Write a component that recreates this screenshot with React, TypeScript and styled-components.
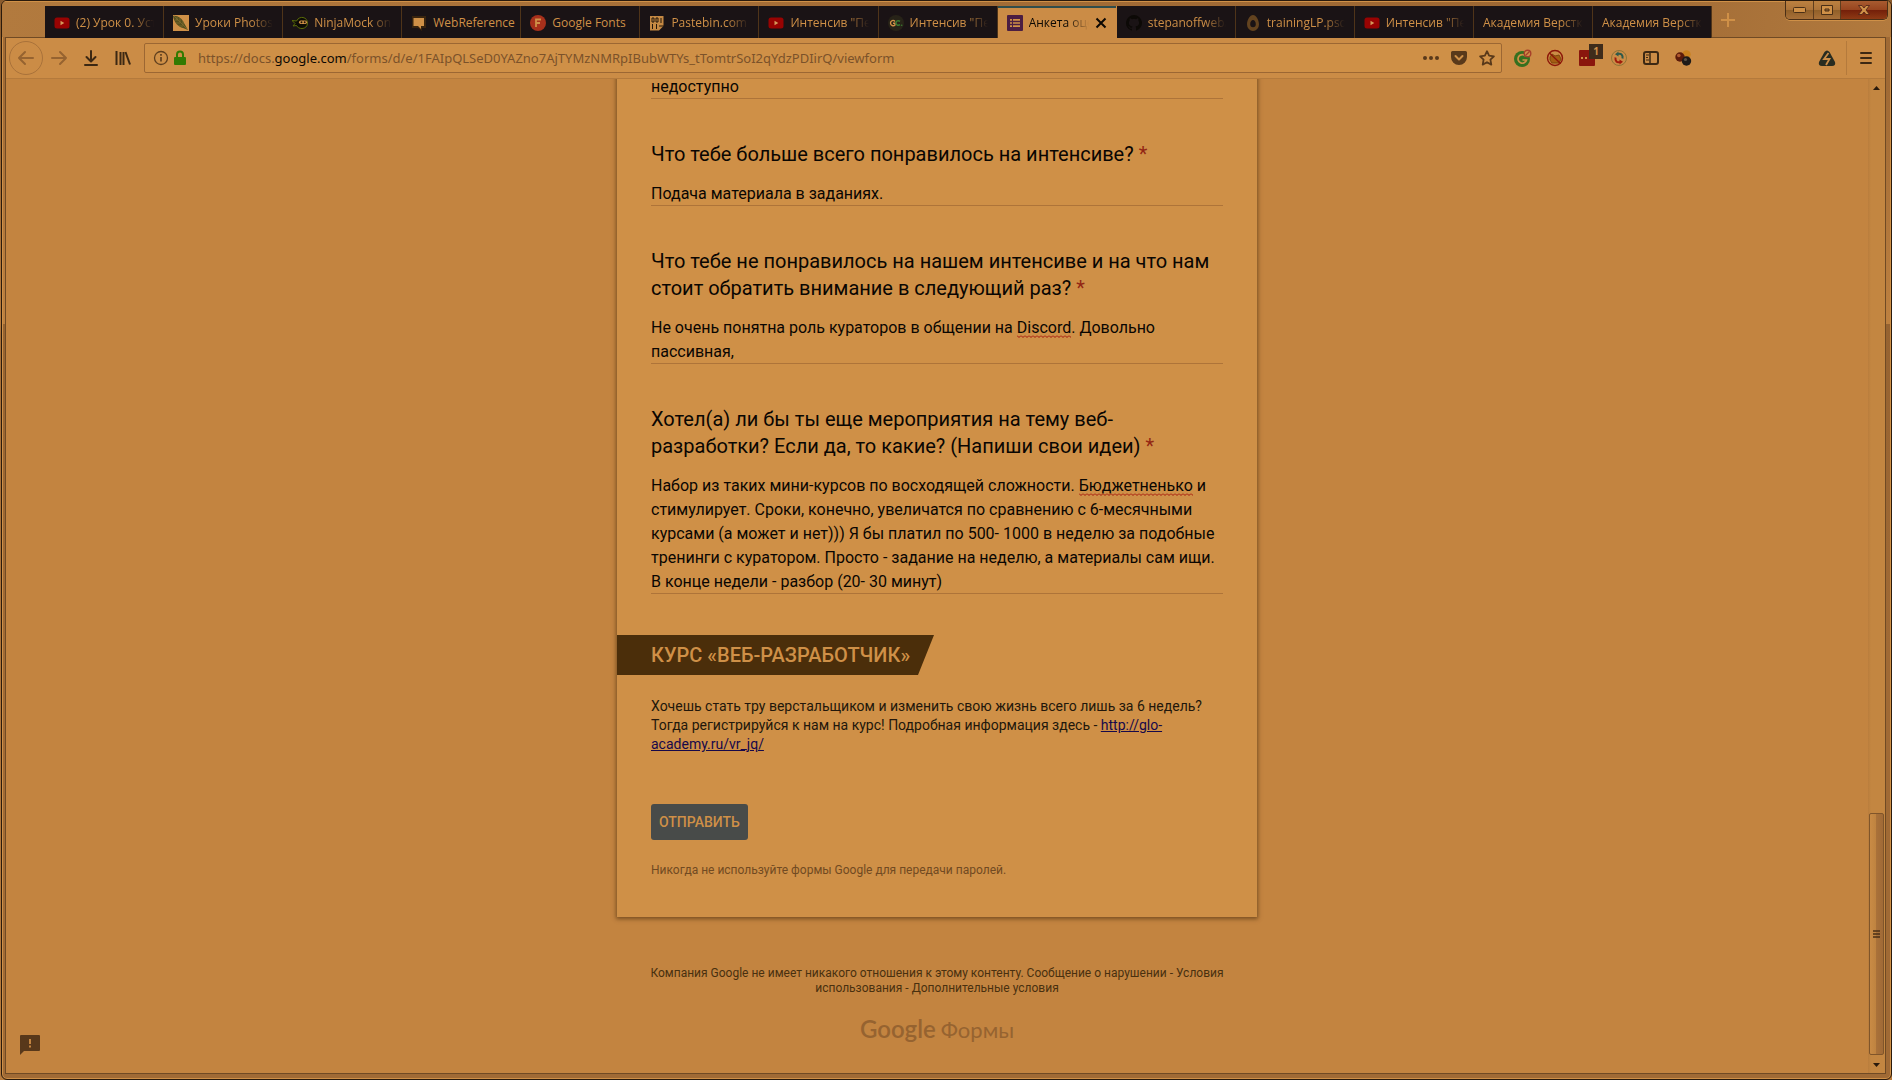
import React, { useLayoutEffect, useState } from 'react';
import styled, { createGlobalStyle, css } from 'styled-components';

const ui = '"Noto Sans", "Open Sans", sans-serif';
const tabFont = '"Open Sans", "Noto Sans", sans-serif';
const roboto = 'Roboto, "Liberation Sans", sans-serif';

const Global = createGlobalStyle`
  *, *::before, *::after { box-sizing: border-box; }
  body { margin: 0; background: #a97139; font-family: ${ui}; }
`;

const Desktop = styled.div`
  height: 100vh;
  padding-left: 1px;
  background: linear-gradient(#8a5b2d, #b87c3e 30%, #a97139 31%, #b87c3e);
`;

const Window = styled.div`
  height: 100%;
  display: flex;
  flex-direction: column;
  overflow: hidden;
  border: 1px solid #2a1a0c;
  border-radius: 6px;
  background: linear-gradient(#a06a35 8%, #be8140 30%, #966331 30%, #a06a35 60%);
  box-shadow: inset 0 0 0 1px #cf9047;
`;

const TitleBar = styled.header`
  display: flex;
  align-items: flex-start;
  height: 36px;
  padding: 5px 3px 0 43px;
  background: linear-gradient(100deg, #b27a3e, #a56e37 40%, #9c6733 82%, #b27a3e 100%);
  box-shadow: inset 0 1px 0 #cf9047;
`;

const Tabs = styled.nav`
  position: relative;
  display: flex;
  flex: 0 1 1667px;
  min-width: 0;
  height: 32px;
`;

const TabButton = styled.button<{ $active?: boolean }>`
  flex: 1 1 0;
  min-width: 0;
  display: flex;
  align-items: center;
  gap: 6px;
  padding: 2px 9px 0;
  border: 0;
  border-right: 1px solid #4f3419;
  background: #1a1315;
  color: #cf9047;
  font: 12px/16px ${tabFont};
  text-align: left;
  ${p => p.$active && css`
    background: #cb8c46;
    color: #0c0803;
    border-right-color: #cb8c46;
    box-shadow: inset 0 2px 0 #2f4d4c;
  `}
  > svg { flex: none; }
`;

const TabLabel = styled.span<{ $whole?: boolean }>`
  flex: 1;
  min-width: 0;
  overflow: ${p => (p.$whole ? 'visible' : 'hidden')};
  white-space: nowrap;
  mask-image: ${p => (p.$whole ? 'none' : 'linear-gradient(to left, transparent, #000 22px)')};
`;

const NewTab = styled.button`
  width: 32px;
  height: 31px;
  padding: 0;
  border: 0;
  background: none;
  color: #cf9047;
`;

const Controls = styled.div`
  display: flex;
  height: 19px;
  margin: -5px 0 0 auto;
  border: 1px solid #4a2f16;
  border-top: 0;
  border-radius: 0 0 5px 5px;
  overflow: hidden;
  box-shadow: 0 1px 0 #cf9047;
`;

const Control = styled.button<{ $close?: boolean }>`
  display: grid;
  place-items: center;
  width: ${p => (p.$close ? 47 : 27)}px;
  padding: 0;
  border: 0;
  border-left: 1px solid #5f3d1d;
  background: ${p => (p.$close
    ? 'linear-gradient(#a85b30, #98451f 48%, #74200a 52%, #8e3a14)'
    : 'linear-gradient(#bd8140, #ac7339 48%, #916029 52%, #a87038)')};
  &:first-child { border-left: 0; }
`;

const Frame = styled.div`
  flex: 1;
  min-height: 0;
  display: flex;
  flex-direction: column;
  margin: 0 5px 5px 3px;
  border: 1px solid #704a24;
`;

const Toolbar = styled.div`
  display: flex;
  align-items: center;
  height: 41px;
  flex: none;
  padding: 0 3px;
  background: #cb8c46;
  border-bottom: 1px solid #b47a3c;
`;

const ToolButton = styled.button<{ $circle?: boolean; $size?: number }>`
  display: grid;
  place-items: center;
  flex: none;
  width: ${p => p.$size ?? 32}px;
  height: 34px;
  padding: 0;
  border: ${p => (p.$circle ? '1px solid #a9723a' : '0')};
  border-radius: ${p => (p.$circle ? '50%' : '0')};
  background: none;
  position: relative;
`;

const UrlBar = styled.div`
  flex: 1 1 0;
  max-width: 1358px;
  display: flex;
  align-items: center;
  height: 30px;
  margin-left: 5px;
  padding: 0 0 0 8px;
  border: 1px solid #9c6733;
  border-radius: 2px;
  background: #cf9047;
  > svg { flex: none; margin-right: 4px; }
`;

const Url = styled.div`
  flex: 1;
  min-width: 0;
  overflow: hidden;
  white-space: nowrap;
  padding-left: 7px;
  font: 13px/20px ${ui};
  color: #7b522a;
  b { font-weight: 400; color: #0c0803; }
`;

const UrlActions = styled.div`
  display: flex;
  > button { width: 28px; }
`;

const Extensions = styled.div`
  display: flex;
  margin-left: 5px;
`;

const Badge = styled.span`
  position: absolute;
  top: 3px;
  right: 0;
  width: 14px;
  height: 15px;
  background: #3f2c1b;
  color: #cf9047;
  font: bold 10px/15px ${ui};
  text-align: center;
`;

const MenuArea = styled.div`
  display: flex;
  align-items: center;
  gap: 3px;
  margin-left: auto;
`;

const MenuBox = styled.div`
  padding-left: 3px;
  border-left: 1px solid #b47a3c;
`;

const View = styled.div`
  flex: 1;
  min-height: 0;
  display: flex;
  background: #c38440;
`;

const Page = styled.main`
  flex: 1;
  min-width: 0;
  display: flex;
  flex-direction: column;
  justify-content: flex-end;
  align-items: center;
  overflow: hidden;
  position: relative;
  font-family: ${roboto};
`;

const Card = styled.form`
  flex: none;
  width: 640px;
  max-width: 100%;
  padding: 16px 34px 38px;
  background: #cf9047;
  box-shadow: 0 1px 4px 1px rgba(60, 34, 8, 0.55);
`;

const Questions = styled.div`
  display: flex;
  flex-direction: column;
  gap: 42px;
  margin-bottom: 41px;
`;

const Title = styled.label`
  display: block;
  margin-bottom: 14px;
  font-size: 20px;
  line-height: 27px;
  color: #0a0602;
`;

const Star = styled.span`
  color: #932613;
`;

const AnswerBox = styled.div`
  position: relative;
  box-shadow: inset 0 -1px 0 #ae7439;
`;

const Answer = styled.textarea`
  display: block;
  width: 100%;
  padding: 0;
  border: 0;
  outline: 0;
  resize: none;
  overflow: hidden;
  background: none;
  color: #0a0602;
  font: 16px/24px ${roboto};
`;

const Squiggle = styled.svg`
  position: absolute;
  top: 19px;
  height: 3px;
`;

const Banner = styled.h2`
  width: 317px;
  height: 40px;
  margin: 0 0 22px -34px;
  padding-left: 34px;
  background: #4b2e0a;
  clip-path: polygon(0 0, 100% 0, calc(100% - 16px) 100%, 0 100%);
  color: #cf9047;
  font-size: 20px;
  font-weight: 500;
  line-height: 40px;
  white-space: nowrap;
`;

const Promo = styled.p`
  margin: 0 0 50px;
  font-size: 14px;
  line-height: 19px;
  color: #22170b;
  a { color: #16084a; }
`;

const Submit = styled.button`
  display: block;
  height: 36px;
  margin-bottom: 21px;
  padding: 0 8px;
  border: 0;
  border-radius: 3px;
  background: #484b49;
  color: #cf9047;
  font: 500 14px/36px ${roboto};
`;

const Note = styled.p`
  margin: 0;
  font-size: 12px;
  line-height: 18px;
  color: #714a22;
`;

const Footer = styled.footer`
  flex: none;
  width: 576px;
  max-width: 100%;
  padding: 49px 0 29px;
  text-align: center;
  font-size: 12px;
  line-height: 15px;
  color: #49300f;
  a { color: inherit; text-decoration: none; }
`;

const Logo = styled.div`
  display: flex;
  justify-content: center;
  align-items: baseline;
  gap: 5px;
  height: 30px;
  margin-top: 18px;
  color: #966330;
  font-family: Lato, sans-serif;
  font-size: 22px;
  line-height: 30px;
`;

const LogoMark = styled.span`
  font-size: 24px;
  font-weight: 600;
`;

const Report = styled.button`
  position: absolute;
  left: 14px;
  bottom: 18px;
  width: 20px;
  height: 20px;
  padding: 0;
  border: 0;
  background: none;
  > svg { display: block; }
`;

const Scroll = styled.div`
  width: 17px;
  flex: none;
  display: flex;
  flex-direction: column;
  align-items: center;
  justify-content: space-between;
  padding: 7px 1px 6px;
  background: linear-gradient(90deg, #b97d3d, #c38641 3px, #c38641);
`;

const Track = styled.div`
  flex: 1;
  width: 15px;
  display: flex;
  align-items: flex-end;
  padding: 6px 0 8px;
`;

const Thumb = styled.div`
  display: grid;
  place-items: center;
  width: 15px;
  height: 242px;
  border: 1px solid #80552a;
  border-radius: 2px;
  background: linear-gradient(90deg, #c98b45, #bf8340 45%, #a97139 50%, #a06a37);
`;

const YouTube = () => (
  <svg width="16" height="16" viewBox="0 0 16 16">
    <rect x="0.5" y="2.5" width="15" height="11" rx="2.5" fill="#980302" />
    <path d="M6.5 5.8 10.3 8 6.5 10.2z" fill="#d59a5a" />
  </svg>
);
const Feather = () => (
  <svg width="16" height="16" viewBox="0 0 16 16">
    <rect width="16" height="16" fill="#cf9047" />
    <path d="M0 1C4 0 9 3 11 8l4 7-5-2C5 12 1 7 0 1z" fill="#56501f" />
    <path d="M1 1l13 13M4 2v3M7 3v4M10 6v4M2 5h3M3 8h4M6 11h4" stroke="#857030" strokeWidth=".7" />
  </svg>
);
const Ninja = () => (
  <svg width="16" height="16" viewBox="0 0 16 16">
    <path d="M0 5.500l4.500.5C6 3 9 2 11 2.500c3 .5 4.500 3 4.500 5.500 0 3.500-2.500 5.500-5.500 5.500-2.500 0-4.500-1-5.500-3L1 11l2-2.500z" fill="#0d0b05" stroke="#5b6c0a" />
    <rect x="7" y="5.500" width="8" height="3.500" rx="1.700" fill="#cf9047" />
    <circle cx="9.500" cy="7.200" r="1" fill="#1a1208" /><circle cx="12.700" cy="7.200" r="1" fill="#1a1208" />
  </svg>
);
const WebRef = () => (
  <svg width="16" height="16" viewBox="0 0 16 16">
    <path d="M1 1h14v12h-4v3l-4-3H1z" fill="#38240f" />
    <path d="M2.500 3h10.500v8H10v3l-3-3H2.500z" fill="#cf9047" />
  </svg>
);
const FontsIcon = () => (
  <svg width="16" height="16" viewBox="0 0 16 16">
    <circle cx="8" cy="8" r="8" fill="#a7301b" />
    <path d="M6 12V4.500h5M6 8h4" stroke="#cf9047" strokeWidth="1.800" fill="none" />
  </svg>
);
const Pastebin = () => (
  <svg width="16" height="16" viewBox="0 0 16 16">
    <path d="M1 1h13.500v10L10 15.500H1z" fill="#c58943" />
    <path d="M3 3h2v4H3zM7 3h2v4H7zM12 3v5M3.500 9v5M7.500 9v5M10 11h5" stroke="#23170b" fill="none" />
  </svg>
);
const GetCourse = () => (
  <svg width="16" height="16" viewBox="0 0 16 16">
    <circle cx="8" cy="8" r="8" fill="#272318" />
    <path d="M7 6.500C5.500 4.500 2.500 5.500 2.500 8s3 3.500 4.500 2V8.200H5" stroke="#cf9047" strokeWidth="1.400" fill="none" />
    <path d="M12 6.300c-2-1.500-4 0-4 1.700s2 3.200 4 1.700" stroke="#397a30" strokeWidth="1.500" fill="none" />
    <circle cx="13.700" cy="10.300" r=".8" fill="#397a30" />
  </svg>
);
const FormsIcon = () => (
  <svg width="16" height="16" viewBox="0 0 16 16">
    <rect width="16" height="16" rx="1" fill="#4b1e42" />
    <path d="M3 4.800h2M3 8h2M3 11.200h2M6 4.800h7M6 8h7M6 11.200h7" stroke="#cf9047" strokeWidth="1.700" />
  </svg>
);
const GitHub = () => (
  <svg width="16" height="16" viewBox="0 0 16 16">
    <path fill="#0c0906" d="M8 0a8 8 0 0 0-2.530 15.590c.4.070.55-.17.55-.38v-1.490c-2.230.48-2.700-.95-2.700-.95-.36-.92-.89-1.170-.89-1.170-.73-.5.050-.49.050-.49.8.060 1.230.83 1.230.83.72 1.220 1.870.87 2.330.66.070-.52.280-.87.510-1.070-1.780-.2-3.640-.89-3.640-3.950 0-.87.310-1.590.82-2.150-.08-.2-.36-1.020.08-2.120 0 0 .67-.21 2.200.82a7.600 7.600 0 0 1 4 0c1.530-1.040 2.200-.82 2.200-.82.44 1.100.16 1.920.08 2.120.51.560.82 1.270.82 2.150 0 3.070-1.870 3.750-3.650 3.950.29.250.54.730.54 1.480v2.190c0 .21.150.46.550.38A8 8 0 0 0 8 0z" />
  </svg>
);
const Egg = () => (
  <svg width="16" height="16" viewBox="0 0 16 16">
    <path fillRule="evenodd" fill="#63431f" d="M8 0c3 0 6 5 6 9.500a6 6.500 0 0 1-12 0C2 5 5 0 8 0zm0 5C6.500 5 5.200 7 5.200 9.200a2.800 3 0 0 0 5.600 0C10.800 7 9.500 5 8 5z" />
  </svg>
);

type TabData = { label: string; icon?: React.ReactNode; active?: boolean; whole?: boolean };
const tabs: TabData[] = [
  { label: '(2) Урок 0. Установка', icon: <YouTube /> },
  { label: 'Уроки Photoshop', icon: <Feather /> },
  { label: 'NinjaMock online', icon: <Ninja /> },
  { label: 'WebReference', icon: <WebRef />, whole: true },
  { label: 'Google Fonts', icon: <FontsIcon />, whole: true },
  { label: 'Pastebin.com - #1', icon: <Pastebin /> },
  { label: 'Интенсив "Первый', icon: <YouTube /> },
  { label: 'Интенсив "Первый', icon: <GetCourse /> },
  { label: 'Анкета оценки', icon: <FormsIcon />, active: true },
  { label: 'stepanoffweb/tr', icon: <GitHub /> },
  { label: 'trainingLP.psd -', icon: <Egg /> },
  { label: 'Интенсив "Первый', icon: <YouTube /> },
  { label: 'Академия Верстки' },
  { label: 'Академия Верстки' },
];

const ink = '#3c2813';

const BackIcon = ({ flip }: { flip?: boolean }) => (
  <svg width="18" height="16" viewBox="0 0 18 16" fill="none" stroke="#966330" strokeWidth="2" strokeLinecap="round" strokeLinejoin="round">
    <path d={flip ? 'M2 8h14M10 2l6 6-6 6' : 'M16 8H2M8 2 2 8l6 6'} />
  </svg>
);

const ExtIcons = {
  green: (
    <svg width="18" height="18" viewBox="0 0 18 18">
      <circle cx="8" cy="10" r="8" fill="#35701f" />
      <path d="M11.500 7A4.300 4.300 0 1 0 12.500 11H8.500" stroke="#cf9047" strokeWidth="1.700" fill="none" />
      <circle cx="13.500" cy="4.500" r="3.300" fill="#cf9047" stroke="#a7402a" strokeWidth="1.400" />
      <path d="M11.500 6.500l4-4" stroke="#a7402a" strokeWidth="1.300" />
    </svg>
  ),
  blocked: (
    <svg width="18" height="18" viewBox="0 0 18 18">
      <path d="M4 8l2-3 3 2 4-1 2 4-2 4H6l-2-3z" fill="#a45d13" stroke="#7d470c" />
      <circle cx="9" cy="9" r="7.500" fill="none" stroke="#8c1709" strokeWidth="1.400" />
      <path d="M3.500 4l11 10.500" stroke="#8c1709" strokeWidth="1.400" />
    </svg>
  ),
  red: (
    <svg width="18" height="18" viewBox="0 0 18 18">
      <rect x="1" y="1" width="16" height="16" rx="1" fill="#8a160d" />
      <path d="M3 9h2M7 9h2M11 9h2" stroke="#cf9047" strokeWidth="2" />
    </svg>
  ),
  sync: (
    <svg width="18" height="18" viewBox="0 0 18 18" fill="none">
      <circle cx="9" cy="9" r="7.500" stroke="#8f7438" />
      <path d="M8 5c3-1 5 1 4.500 4.500" stroke="#2e5a4b" strokeWidth="2" />
      <path d="M5 5.200 8.500 2.500v5z" fill="#2e5a4b" />
      <path d="M10 13C7 14 5 12 5.500 8.500" stroke="#a01b0b" strokeWidth="2" />
      <path d="M13 12.800l-3.500 2.700v-5z" fill="#a01b0b" />
    </svg>
  ),
  reader: (
    <svg width="18" height="16" viewBox="0 0 18 16" fill="none" stroke={ink} strokeWidth="2">
      <rect x="2" y="2" width="14" height="12" rx="2" />
      <path d="M8 2v12" strokeWidth="1.500" /><path d="M4 5h3M4 7.500h2M4 10h3" strokeWidth="1" />
    </svg>
  ),
  balls: (
    <svg width="18" height="18" viewBox="0 0 18 18">
      <circle cx="12.500" cy="5.500" r="4.200" fill="#c8811e" />
      <circle cx="6" cy="8" r="4.700" fill="#5c1b0a" /><circle cx="4.800" cy="6.500" r="1.800" fill="#b0592e" />
      <circle cx="12.500" cy="12" r="4.700" fill="#1f1b18" /><circle cx="11.500" cy="10.500" r="1.600" fill="#5d5245" />
    </svg>
  ),
};

type AnswerProps = { id: string; text: string; rows: number; misspelt?: string; label?: string };

function AnswerField({ id, text, rows, misspelt, label }: AnswerProps) {
  const [mark, setMark] = useState<{ left: number; width: number } | null>(null);
  useLayoutEffect(() => {
    if (!misspelt) return;
    const ctx = document.createElement('canvas').getContext('2d');
    if (!ctx) return;
    ctx.font = `16px ${roboto}`;
    setMark({
      left: Math.round(ctx.measureText(text.slice(0, text.indexOf(misspelt))).width),
      width: Math.round(ctx.measureText(misspelt).width),
    });
  }, [text, misspelt]);
  return (
    <AnswerBox>
      <Answer id={id} rows={rows} defaultValue={text} spellCheck={false} aria-label={label} />
      {mark && (
        <Squiggle style={{ left: mark.left, width: mark.width }} aria-hidden="true">
          <defs>
            <pattern id={`${id}-wave`} width="4" height="3" patternUnits="userSpaceOnUse">
              <path d="M0 .5 2 2.500 4 .5" stroke="#a3120a" fill="none" />
            </pattern>
          </defs>
          <rect width="100%" height="3" fill={`url(#${id}-wave)`} />
        </Squiggle>
      )}
    </AnswerBox>
  );
}

const questions = [
  { id: 'liked', title: 'Что тебе больше всего понравилось на интенсиве?', text: 'Подача материала в заданиях.', rows: 1 },
  {
    id: 'disliked',
    title: 'Что тебе не понравилось на нашем интенсиве и на что нам стоит обратить внимание в следующий раз?',
    text: 'Не очень понятна роль кураторов в общении на Discord. Довольно пассивная,',
    rows: 2,
    misspelt: 'Discord',
  },
  {
    id: 'ideas',
    title: 'Хотел(а) ли бы ты еще мероприятия на тему веб-разработки? Если да, то какие? (Напиши свои идеи)',
    text: 'Набор из таких мини-курсов по восходящей сложности. Бюджетненько и стимулирует. Сроки, конечно, увеличатся по сравнению с 6-месячными курсами (а может и нет))) Я бы платил по 500- 1000 в неделю за подобные тренинги с куратором. Просто - задание на неделю, а материалы сам ищи. В конце недели - разбор (20- 30 минут)',
    rows: 5,
    misspelt: 'Бюджетненько',
  },
];

export default function App() {
  return (
    <Desktop>
      <Global />
      <Window>
        <TitleBar>
          <Tabs>
            {tabs.map((t, i) => (
              <TabButton key={i} $active={t.active}>
                {t.icon}
                <TabLabel $whole={t.whole}>{t.label}</TabLabel>
                {t.active && (
                  <svg width="12" height="12" viewBox="0 0 12 12" stroke="#0c0803" strokeWidth="2">
                    <path d="M1.500 1.500l9 9M10.500 1.500l-9 9" />
                  </svg>
                )}
              </TabButton>
            ))}
          </Tabs>
          <NewTab aria-label="Новая вкладка">
            <svg width="14" height="14" viewBox="0 0 14 14" stroke="currentColor" strokeWidth="2"><path d="M7 0v14M0 7h14" /></svg>
          </NewTab>
          <Controls>
            <Control aria-label="Свернуть">
              <svg width="13" height="6" viewBox="0 0 13 6"><rect x=".5" y=".5" width="12" height="5" rx="1" fill="#cf9047" stroke="#4a2f16" /></svg>
            </Control>
            <Control aria-label="Развернуть">
              <svg width="12" height="10" viewBox="0 0 12 10"><path fillRule="evenodd" d="M.5.500h11v9H.500zM4 4v2h4V4z" fill="#cf9047" stroke="#4a2f16" /></svg>
            </Control>
            <Control $close aria-label="Закрыть">
              <svg width="12" height="10" viewBox="0 0 12 10"><path d="M.5.500h3.500L6 3l2-2.500h3.500L8 5l3.500 4.500H8L6 7 4 9.500H.500L4 5z" fill="#cf9047" stroke="#4a2016" strokeWidth=".8" /></svg>
            </Control>
          </Controls>
        </TitleBar>
        <Frame>
          <Toolbar>
            <ToolButton $circle $size={34} aria-label="Назад"><BackIcon /></ToolButton>
            <ToolButton aria-label="Вперёд"><BackIcon flip /></ToolButton>
            <ToolButton aria-label="Загрузки">
              <svg width="14" height="16" viewBox="0 0 14 16" fill="none" stroke={ink} strokeWidth="2" strokeLinecap="round" strokeLinejoin="round">
                <path d="M7 1v10M2.500 7 7 11.500 11.500 7M1 15h12" />
              </svg>
            </ToolButton>
            <ToolButton aria-label="Библиотека">
              <svg width="16" height="14" viewBox="0 0 16 14" stroke={ink} strokeWidth="2">
                <path d="M1.500 0v14M5.500 1v13M8.500 1v13" /><path d="M10.500 1l4.500 12.500" />
              </svg>
            </ToolButton>
            <UrlBar>
              <svg width="16" height="16" viewBox="0 0 16 16" fill="none" stroke="#5f3f1e" strokeWidth="1.300">
                <circle cx="8" cy="8" r="6.500" /><path d="M8 7v4.500M8 4v1.700" strokeWidth="1.700" />
              </svg>
              <svg width="14" height="16" viewBox="0 0 14 16">
                <path d="M4 8V4.500a3 3 0 0 1 6 0V8" fill="none" stroke="#327a02" strokeWidth="2" />
                <rect x="1" y="7" width="12" height="8" rx="1" fill="#327a02" />
              </svg>
              <Url>https://docs.<b>google.com</b>/forms/d/e/1FAIpQLSeD0YAZno7AjTYMzNMRpIBubWTYs_tTomtrSoI2qYdzPDIirQ/viewform</Url>
              <UrlActions>
                <ToolButton aria-label="Действия на странице">
                  <svg width="16" height="4" viewBox="0 0 16 4" fill="#59391a"><circle cx="2" cy="2" r="2" /><circle cx="8" cy="2" r="2" /><circle cx="14" cy="2" r="2" /></svg>
                </ToolButton>
                <ToolButton aria-label="Pocket">
                  <svg width="16" height="14" viewBox="0 0 16 14">
                    <path d="M1.500 0h13A1.500 1.500 0 0 1 16 1.500V6a8 8 0 0 1-16 0V1.500A1.500 1.500 0 0 1 1.500 0z" fill="#59391a" />
                    <path d="M4.500 5 8 8.500 11.500 5" fill="none" stroke="#cf9047" strokeWidth="2" strokeLinecap="round" strokeLinejoin="round" />
                  </svg>
                </ToolButton>
                <ToolButton aria-label="Добавить в закладки">
                  <svg width="16" height="16" viewBox="0 0 16 16" fill="none" stroke="#59391a" strokeWidth="1.800" strokeLinejoin="round">
                    <path d="M8 1.200l2.100 4.500 4.800.6-3.500 3.400.9 4.900L8 12.200l-4.300 2.400.9-4.900L1.100 6.300l4.800-.6z" />
                  </svg>
                </ToolButton>
              </UrlActions>
            </UrlBar>
            <Extensions>
              <ToolButton aria-label="Расширение 1">{ExtIcons.green}</ToolButton>
              <ToolButton aria-label="Расширение 2">{ExtIcons.blocked}</ToolButton>
              <ToolButton aria-label="LastPass">{ExtIcons.red}<Badge>1</Badge></ToolButton>
              <ToolButton aria-label="Синхронизация">{ExtIcons.sync}</ToolButton>
              <ToolButton aria-label="Боковая панель">{ExtIcons.reader}</ToolButton>
              <ToolButton aria-label="Расширение 3">{ExtIcons.balls}</ToolButton>
            </Extensions>
            <MenuArea>
              <ToolButton aria-label="Расширение 4">
                <svg width="18" height="18" viewBox="0 0 18 18">
                  <path d="M6.500 3Q9 0 11.500 3L17 13q1 4-3 4H4q-4 0-3-4z" fill="#292c20" />
                  <path d="M10.500 4 6 10h5.500L8 16" fill="none" stroke="#cb8c46" strokeWidth="1.800" />
                </svg>
              </ToolButton>
              <MenuBox>
                <ToolButton aria-label="Меню">
                  <svg width="12" height="12" viewBox="0 0 12 12" stroke={ink} strokeWidth="2" strokeLinecap="round"><path d="M1 1h10M1 6h10M1 11h10" /></svg>
                </ToolButton>
              </MenuBox>
            </MenuArea>
          </Toolbar>
          <View>
            <Page>
              <Card onSubmit={e => e.preventDefault()}>
                <Questions>
                  <AnswerField id="previous" text="недоступно" rows={1} label="Ответ" />
                  {questions.map(q => (
                    <div key={q.id}>
                      <Title htmlFor={q.id}>{q.title} <Star>*</Star></Title>
                      <AnswerField id={q.id} text={q.text} rows={q.rows} misspelt={q.misspelt} />
                    </div>
                  ))}
                </Questions>
                <Banner>КУРС «ВЕБ-РАЗРАБОТЧИК»</Banner>
                <Promo>
                  Хочешь стать тру верстальщиком и изменить свою жизнь всего лишь за 6 недель? Тогда регистрируйся к нам на курс! Подробная информация здесь - <a href="http://glo-academy.ru/vr_jq/">http://glo-academy.ru/vr_jq/</a>
                </Promo>
                <Submit type="submit">ОТПРАВИТЬ</Submit>
                <Note>Никогда не используйте формы Google для передачи паролей.</Note>
              </Card>
              <Footer>
                Компания Google не имеет никакого отношения к этому контенту. <a href="#report">Сообщение о нарушении</a> - <a href="#terms">Условия использования</a> - <a href="#more">Дополнительные условия</a>
                <Logo><LogoMark>Google</LogoMark>Формы</Logo>
              </Footer>
              <Report aria-label="Сообщить о проблеме">
                <svg width="20" height="20" viewBox="0 0 20 20">
                  <path d="M1 0h18a1 1 0 0 1 1 1v14a1 1 0 0 1-1 1H4l-4 4V1a1 1 0 0 1 1-1z" fill="#58381a" />
                  <path d="M9 4h2v5H9zM9 10.500h2v2H9z" fill="#c38440" />
                </svg>
              </Report>
            </Page>
            <Scroll>
              <svg width="7" height="4" viewBox="0 0 7 4"><path d="M0 4 3.500 0 7 4z" fill="#2a1a0c" /></svg>
              <Track>
                <Thumb>
                  <svg width="7" height="8" viewBox="0 0 7 8" stroke="#4a2f16" strokeWidth="1.500"><path d="M0 1h7M0 4h7M0 7h7" /></svg>
                </Thumb>
              </Track>
              <svg width="7" height="4" viewBox="0 0 7 4"><path d="M0 0h7L3.500 4z" fill="#2a1a0c" /></svg>
            </Scroll>
          </View>
        </Frame>
      </Window>
    </Desktop>
  );
}
